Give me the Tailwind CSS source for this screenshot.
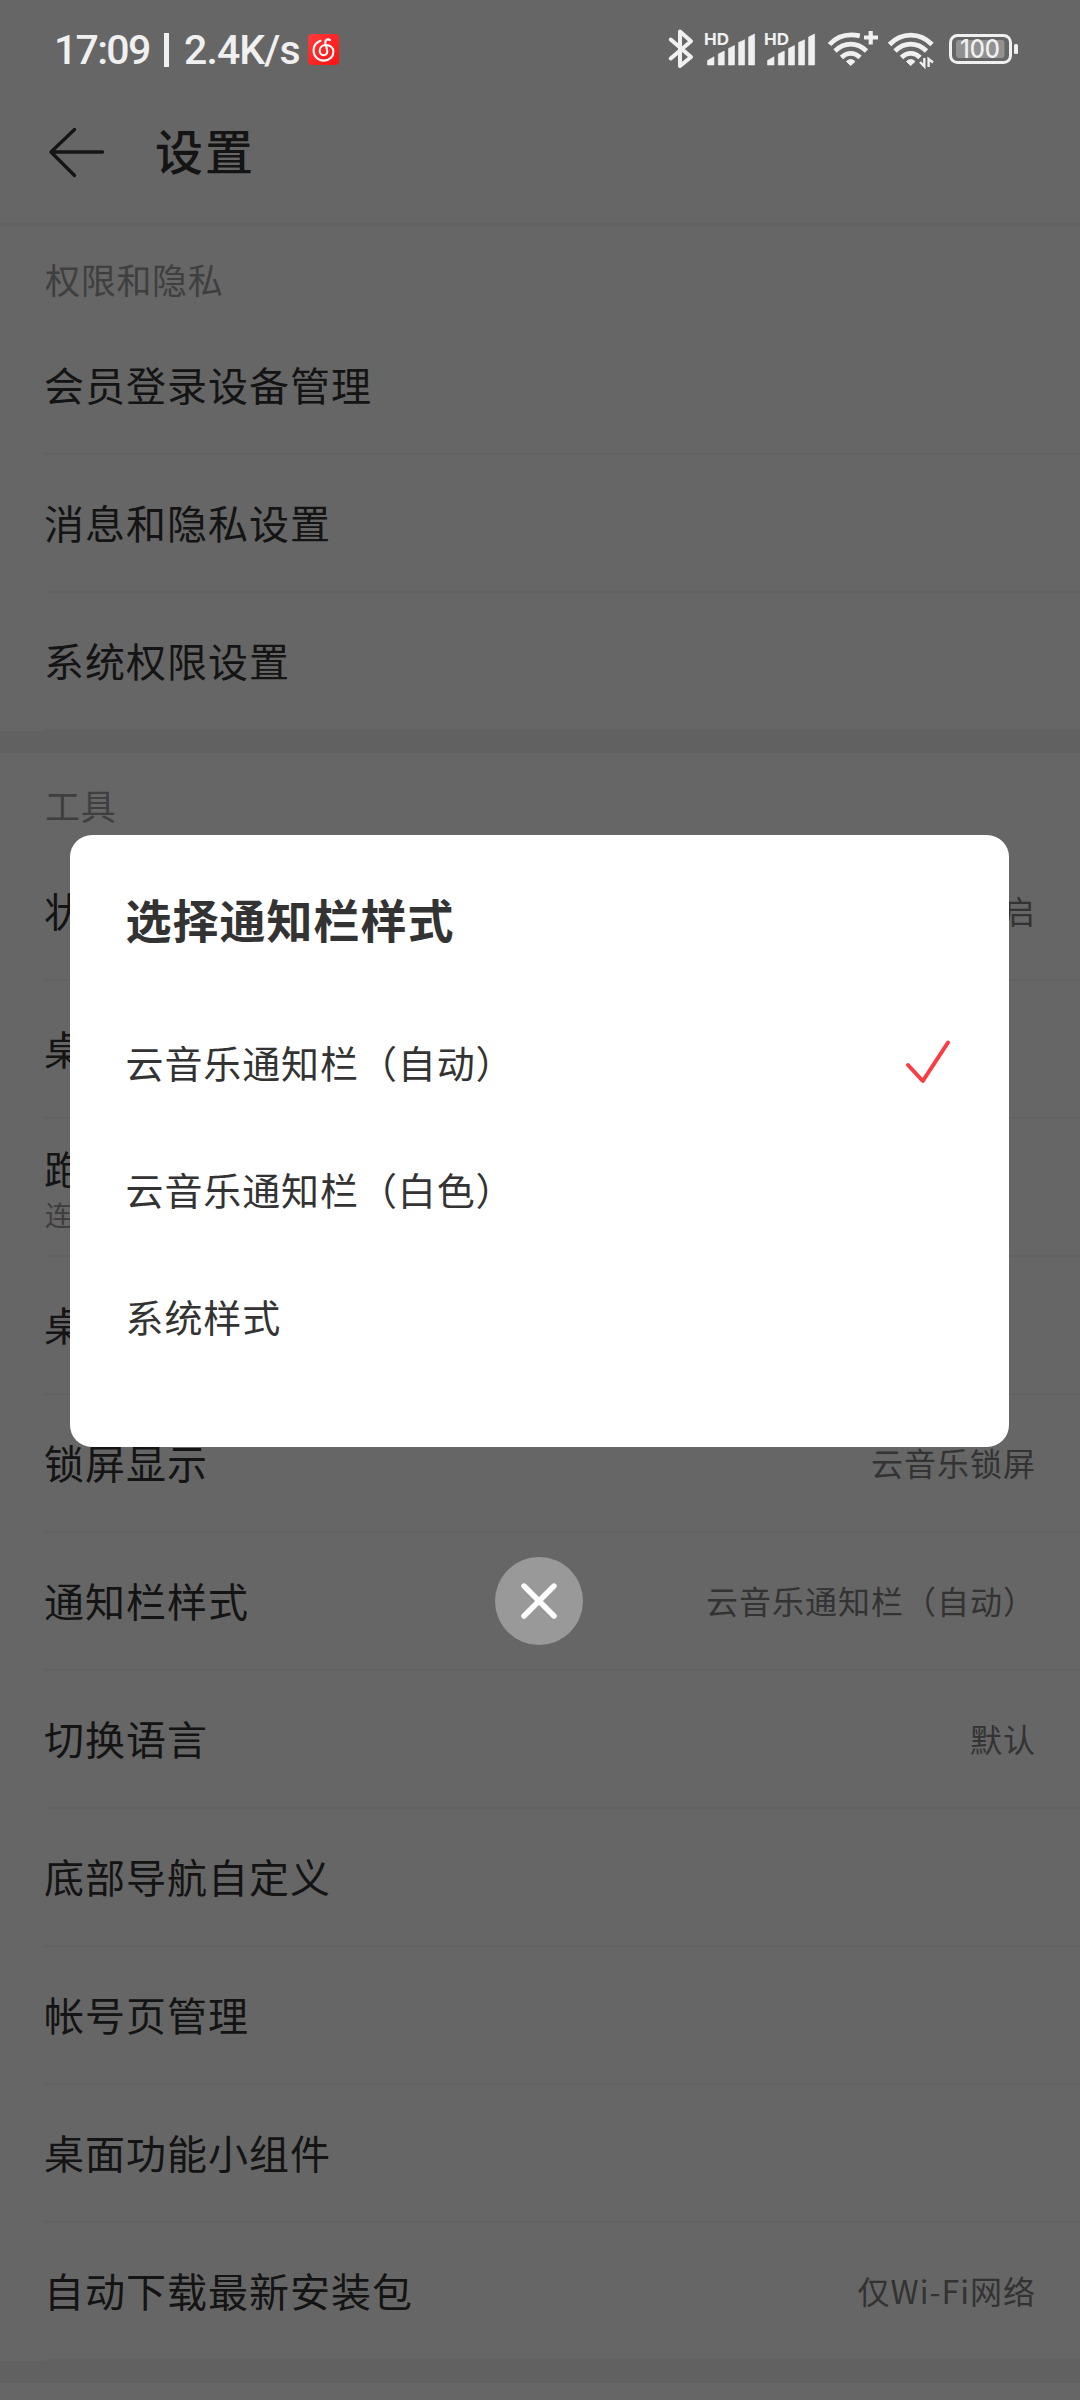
<!DOCTYPE html>
<html lang="zh-CN">

<head>
    <meta charset="UTF-8">
    <meta name="viewport" content="width=device-width, initial-scale=1.0">
    <title>设置</title>
    <script src="https://cdn.jsdelivr.net/npm/@tailwindcss/browser@4"></script>
</head>

<body class="bg-white font-['Noto_Sans_CJK_SC',sans-serif] text-[#333]">
    <div class="relative w-[1080px] h-[2400px] overflow-hidden">

        <!-- Settings page -->
        <header class="h-[227px] pt-[76px] border-b-4 border-[#f5f5f5]">
            <div class="h-[147px] flex items-start pl-[46px]">
                <svg class="w-[62px] h-[52px] mt-[50px]" viewBox="0 0 62 52" fill="none" stroke="#363636" stroke-width="3.4" stroke-linecap="round" stroke-linejoin="round">
                    <path d="M28.5 3.5L5 26l23.500 23.500M5 26h51.500" />
                </svg>
                <h1 class="ml-[47px] mt-[37px] text-[48px] leading-[72px] tracking-[2px] font-medium">设置</h1>
            </div>
        </header>

        <section class="border-b-[22px] border-[#f3f3f3]">
            <h2 class="h-[90px] pl-[45px] pt-[16px] text-[35px] leading-[72px] tracking-[0.7px] text-[#9e9e9e]">权限和隐私</h2>
            <div class="ml-[44px] h-[138px] pb-[2px] flex items-center border-b-2 border-[#f5f5f5] text-[40px] tracking-[1px]">会员登录设备管理</div>
            <div class="ml-[44px] h-[138px] pb-[2px] flex items-center border-b-2 border-[#f5f5f5] text-[40px] tracking-[1px]">消息和隐私设置</div>
            <div class="ml-[44px] h-[138px] pb-[2px] flex items-center border-b-2 border-[#f5f5f5] text-[40px] tracking-[1px]">系统权限设置</div>
        </section>

        <section class="border-b-[22px] border-[#f3f3f3]">
            <h2 class="h-[90px] pl-[45px] pt-[16px] text-[35px] leading-[72px] tracking-[0.7px] text-[#9e9e9e]">工具</h2>
            <div class="ml-[44px] h-[138px] pb-[2px] pr-[44px] flex items-center justify-between border-b-2 border-[#f5f5f5] text-[40px] tracking-[1px]">
                <span>状</span>
                <span class="text-[32px] text-[#808080]">启</span>
            </div>
            <div class="ml-[44px] h-[138px] pb-[2px] flex items-center border-b-2 border-[#f5f5f5] text-[40px] tracking-[1px]">桌</div>
            <div class="ml-[44px] h-[138px] pt-[2px] flex flex-col justify-center border-b-2 border-[#f5f5f5] text-[40px] tracking-[1px]">
                <span class="leading-[54px]">跑</span>
                <span class="pl-px text-[27px] leading-[40px] text-[#999]">连</span>
            </div>
            <div class="ml-[44px] h-[138px] pb-[2px] flex items-center border-b-2 border-[#f5f5f5] text-[40px] tracking-[1px]">桌</div>
            <div class="ml-[44px] h-[138px] pb-[2px] pr-[44px] flex items-center justify-between border-b-2 border-[#f5f5f5] text-[40px] tracking-[1px]">
                <span>锁屏显示</span>
                <span class="text-[32px] text-[#808080]">云音乐锁屏</span>
            </div>
            <div class="ml-[44px] h-[138px] pb-[2px] pr-[44px] flex items-center justify-between border-b-2 border-[#f5f5f5] text-[40px] tracking-[1px]">
                <span>通知栏样式</span>
                <span class="text-[32px] text-[#808080]">云音乐通知栏（自动）</span>
            </div>
            <div class="ml-[44px] h-[138px] pb-[2px] pr-[44px] flex items-center justify-between border-b-2 border-[#f5f5f5] text-[40px] tracking-[1px]">
                <span>切换语言</span>
                <span class="text-[32px] text-[#808080]">默认</span>
            </div>
            <div class="ml-[44px] h-[138px] pb-[2px] flex items-center border-b-2 border-[#f5f5f5] text-[40px] tracking-[1px]">底部导航自定义</div>
            <div class="ml-[44px] h-[138px] pb-[2px] flex items-center border-b-2 border-[#f5f5f5] text-[40px] tracking-[1px]">帐号页管理</div>
            <div class="ml-[44px] h-[138px] pb-[2px] flex items-center border-b-2 border-[#f5f5f5] text-[40px] tracking-[1px]">桌面功能小组件</div>
            <div class="ml-[44px] h-[138px] pb-[2px] pr-[44px] flex items-center justify-between border-b-2 border-[#f5f5f5] text-[40px] tracking-[1px]">
                <span>自动下载最新安装包</span>
                <span class="text-[32px] text-[#808080]">仅Wi-Fi网络</span>
            </div>
        </section>

        <!-- Dialog over the dimmed page -->
        <div class="absolute inset-0 bg-black/60 flex flex-col items-center pt-[835px] pr-[2px]">
            <div class="w-[939px] h-[612px] rounded-[22px] bg-white px-[56px] pt-[47px]">
                <h3 class="h-[116px] text-[46px] leading-[72px] tracking-[1px] font-bold">选择通知栏样式</h3>
                <ul class="text-[38px] tracking-[0.9px]">
                    <li class="h-[127px] flex items-center justify-between">
                        云音乐通知栏（自动）
                        <svg class="w-[48px] h-[48px] mt-[2px]" viewBox="0 0 48 48" fill="none" stroke="#fb3c40" stroke-width="4" stroke-linecap="round" stroke-linejoin="round">
                            <path d="M3 26L17.800 42L43 3.500" />
                        </svg>
                    </li>
                    <li class="h-[127px] flex items-center">云音乐通知栏（白色）</li>
                    <li class="h-[127px] flex items-center">系统样式</li>
                </ul>
            </div>
            <button class="mt-[110px] w-[88px] h-[88px] rounded-full bg-[#999] flex items-center justify-center">
                <svg class="w-[36px] h-[36px]" viewBox="0 0 36 36" stroke="#fff" stroke-width="5.400" stroke-linecap="round">
                    <path d="M3 3l30 30M33 3L3 33" />
                </svg>
            </button>
        </div>

        <!-- Status bar -->
        <div class="absolute top-0 left-0 w-full h-[98px] pl-[54px] pr-[61px] flex items-center justify-between text-[#f0f0f0] font-['Inter','Noto_Sans_CJK_SC',sans-serif]">
            <div class="flex items-center">
                <div class="w-[254px] pt-px flex items-center font-['Roboto',sans-serif] text-[41px] leading-[48px] font-medium whitespace-nowrap">
                    <span class="w-[110px] tracking-[-1.7px]">17:09</span>
                    <span class="w-[5px] h-[34px] bg-[#f0f0f0]"></span>
                    <span class="ml-[15px] tracking-[-0.9px]">2.4K/s</span>
                </div>
                <svg class="w-[31px] h-[31px]" viewBox="0 0 31 31" fill="none">
                    <defs>
                        <linearGradient id="red" x1="0" y1="0" x2="1" y2="1">
                            <stop offset="0" stop-color="#ff3c3a" />
                            <stop offset="1" stop-color="#fb1012" />
                        </linearGradient>
                    </defs>
                    <rect width="31" height="31" rx="4" fill="url(#red)" />
                    <path d="M12.500 6.800C8 8.500 5.600 12.300 5.600 16.500C5.600 22.500 10 26.600 15.700 26.600C21.500 26.600 25.400 22.600 25.400 17.800C25.400 13.600 22 11 17.800 11C14.300 11 11.700 13.500 11.700 16.700C11.700 19.300 13.400 21.100 15.600 21.100C18.100 21.100 19.600 19.200 19.200 16.700L17.400 9.200C16.800 6.300 19.200 4.300 22 6" stroke="#fff" stroke-width="2.100" stroke-linecap="round" />
                </svg>
            </div>
            <!-- bluetooth, two SIMs, two wifi links, battery -->
            <svg class="w-[352px] h-[44px]" viewBox="667 27 352 44" fill="none" stroke="#f0f0f0">
                <path d="M670.700 39.500L691 57L680 66V31.500L691 41.200L670.700 58.500" stroke-width="4" stroke-linecap="round" stroke-linejoin="round" />
                <g id="sim" fill="#f0f0f0" stroke="none">
                    <text x="704" y="45" font-size="16.500" font-weight="700" textLength="25" lengthAdjust="spacingAndGlyphs">HD</text>
                    <path d="M707.500 65V60.500L714 56.800V65zM718.300 65V54L724.300 51V65zM728.500 65V48.500L734.500 45.500V65zM738.600 65V42.500L744.600 39.800V65zM748.600 65V37L754.600 34V65z" stroke="#f0f0f0" stroke-width=".6" stroke-linejoin="round" />
                </g>
                <use href="#sim" x="60" />
                <g stroke-width="4.800">
                    <path d="M829.500 44.500C838.500 34.500 849.500 33.600 859.800 35.800" />
                    <path d="M835 51C844.500 41.900 857 41.900 866.500 51" />
                    <path d="M841.500 57.500C847 51.900 854.500 51.900 860 57.500" />
                    <path d="M864 37.500H878M870.700 31V44.500" stroke-width="4.200" />
                    <path d="M889.500 44.500C901.500 32 920 32 932 44.500" />
                    <path d="M895 51C904.500 41.900 917 41.900 926.500 51" />
                    <path d="M901.500 57.500C907 51.900 914.500 51.900 920 57.500" />
                </g>
                <path d="M846.500 61.500Q850.700 57.500 855 61.500L850.700 65.500zM906.500 61.500Q910.700 57.500 915 61.500L910.700 65.500z" fill="#f0f0f0" />
                <path d="M924.300 58V66.300L920 62M928.600 67V59L933 62.500" stroke-width="2.400" />
                <rect x="950.500" y="35.500" width="60" height="27" rx="7" stroke-width="3" />
                <rect x="956" y="40" width="48.500" height="18" rx="3" fill="#919191" stroke="none" />
                <rect x="1014" y="44" width="4" height="10" rx="1.500" fill="#f0f0f0" stroke="none" />
                <text x="960" y="58" font-size="25" font-weight="500" textLength="40" lengthAdjust="spacingAndGlyphs" fill="#f0f0f0" stroke="none">100</text>
            </svg>
        </div>
    </div>
</body>

</html>
